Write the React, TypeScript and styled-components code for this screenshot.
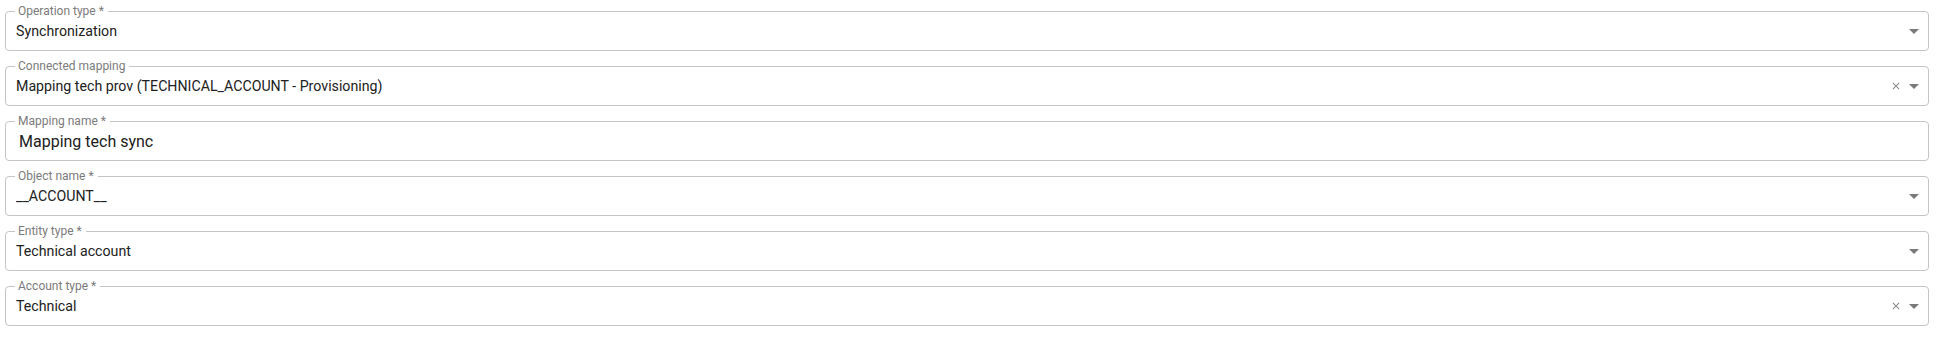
import styled, {createGlobalStyle} from 'styled-components'

const GlobalStyle = createGlobalStyle`
  body{
    margin: 0;
    background: #ffffff;
    font-family: Roboto, "Liberation Sans", Arial, sans-serif;
  }
`

interface FieldData{
  label: string
  value: string
  kind: 'select' | 'text'
  clearable?: boolean
}

const fields: FieldData[] = [
  {label: 'Operation type *', value: 'Synchronization', kind: 'select'},
  {label: 'Connected mapping', value: 'Mapping tech prov (TECHNICAL_ACCOUNT - Provisioning)', kind: 'select', clearable: true},
  {label: 'Mapping name *', value: 'Mapping tech sync', kind: 'text'},
  {label: 'Object name *', value: '__ACCOUNT__', kind: 'select'},
  {label: 'Entity type *', value: 'Technical account', kind: 'select'},
  {label: 'Account type *', value: 'Technical', kind: 'select', clearable: true},
]

function ArrowDown(){
  return (
    <svg width="24" height="24" viewBox="0 0 24 24">
      <path d="M7 10l5 5 5-5z" fill="#7a7a7a" />
    </svg>
  )
}

function ClearIcon(){
  return (
    <svg width="12" height="12" viewBox="0 0 24 24">
      <path d="M19 6.41 17.59 5 12 10.59 6.41 5 5 6.41 10.59 12 5 17.59 6.41 19 12 13.41 17.59 19 19 17.59 13.41 12z" fill="#8a8a8a" />
    </svg>
  )
}

export default function App() {
  return (
    <>
      <GlobalStyle />
      <Form>
        {fields.map((f) => (
          <Field key={f.label}>
            <Legend>{f.label}</Legend>
            <Row>
              <Value $big={f.kind === 'text'}>{f.value}</Value>
              {f.kind === 'select' && (
                <Adornments>
                  {f.clearable && <ClearButton><ClearIcon /></ClearButton>}
                  <ArrowDown />
                </Adornments>
              )}
            </Row>
          </Field>
        ))}
      </Form>
    </>
  )
}

const Form = styled.div`
  display: flex;
  flex-direction: column;
  gap: 8px;
  padding: 4px 9px 0 5px;
`
const Field = styled.fieldset`
  margin: 0;
  padding: 0;
  min-width: 0;
  border: 1px solid #c4c4c4;
  border-radius: 4px;
`
const Legend = styled.legend`
  margin-left: 9px;
  padding: 0 4px 0 3px;
  font-size: 12px;
  line-height: 14px;
  color: #7b7b7b;
`
const Row = styled.div`
  display: flex;
  align-items: center;
  height: 26px;
  margin-bottom: 6px;
  padding: 0 2px 0 10px;
`
const Value = styled.div<{$big?: boolean}>`
  flex: 1;
  padding-left: ${p => p.$big ? '3px' : '0'};
  font-size: ${p => p.$big ? '16px' : '14.2px'};
  color: #212121;
  white-space: nowrap;
  overflow: hidden;
`
const Adornments = styled.div`
  display: flex;
  align-items: center;
`
const ClearButton = styled.span`
  display: flex;
  align-items: center;
`
